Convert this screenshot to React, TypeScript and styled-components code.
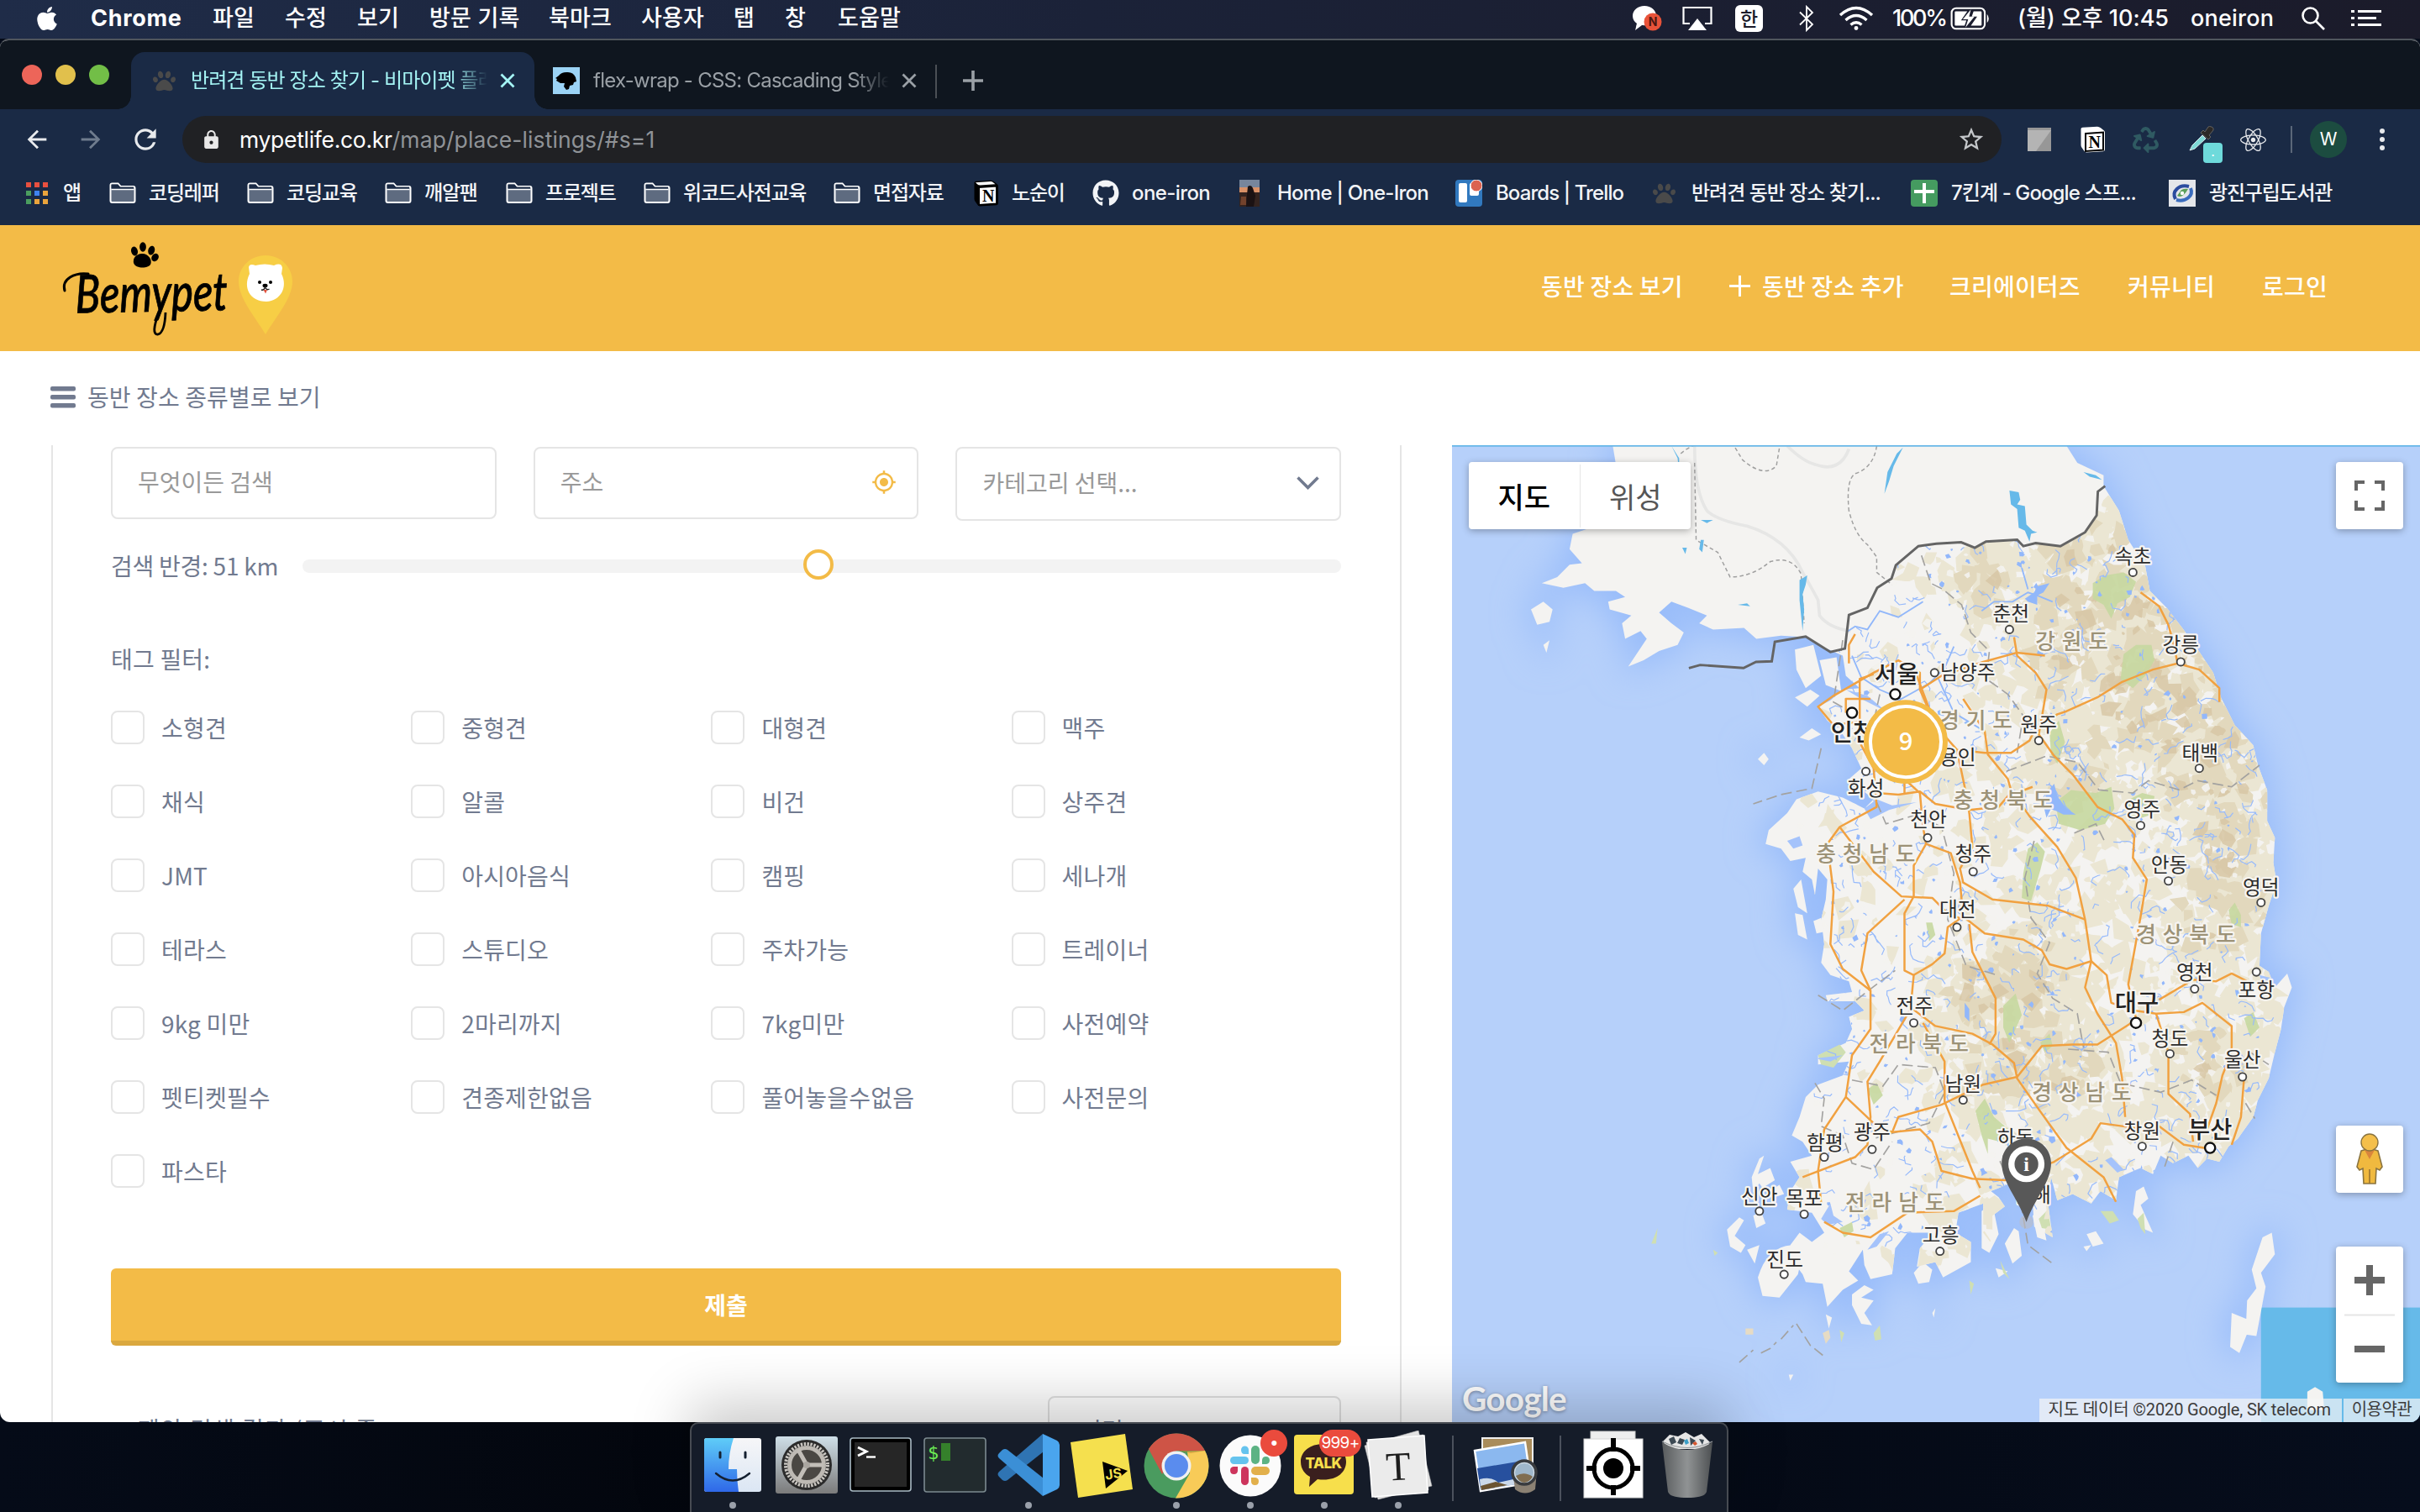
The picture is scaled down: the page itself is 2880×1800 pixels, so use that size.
import React from "react";
import styled, { createGlobalStyle, css } from "styled-components";
import { FaApple, FaGithub, FaPaw, FaReact, FaRecycle } from "react-icons/fa";
import { MdArrowBack, MdArrowForward, MdGpsFixed, MdLock, MdRefresh, MdStarBorder } from "react-icons/md";

const UI = `"Inter", "Noto Sans CJK KR", sans-serif`;
const KR = `"Noto Sans CJK KR", "Noto Sans", sans-serif`;
const YELLOW = "#f3bb47";
const NAVY = "#1a2a45";

const GlobalStyle = createGlobalStyle`
  *, *::before, *::after { box-sizing: border-box; }
  body { margin: 0; background: #03070f; overflow: hidden; }
  svg { display: block; }
`;

const Desktop = styled.div`
  width: 2880px;
  height: 1800px;
  display: flex;
  flex-direction: column;
  overflow: hidden;
  background: linear-gradient(90deg, #050b18, #03060d 30%, #060d1c);
  font-family: ${UI};
`;

/* ---------- shared ---------- */
const Slot = styled.div<{ $w: number; $pad?: number }>`
  width: ${(p) => p.$w}px;
  padding-left: ${(p) => p.$pad ?? 0}px;
  flex: none;
  display: flex;
  align-items: center;
  white-space: nowrap;
`;

/* ---------- menu bar ---------- */
const MenuBar = styled.header`
  height: 46px;
  flex: none;
  display: flex;
  align-items: center;
  padding-left: 40px;
  background: linear-gradient(90deg, #1f2c48 0%, #1b2238 45%, #1b1b2a 100%);
  color: #fff;
  font-size: 27px;
  line-height: 44px;
  padding-bottom: 3px;
`;
const MenuItem = styled(Slot)<{ $bold?: boolean; $ls?: number }>`
  font-weight: ${(p) => (p.$bold ? 700 : 500)};
  letter-spacing: ${(p) => p.$ls ?? 0}px;
`;
const Grow = styled.div`
  flex: 1;
`;
const HanBox = styled.div`
  width: 33px;
  height: 32px;
  border-radius: 6px;
  background: #fff;
  color: #1b1b2a;
  font: 500 23px/31px ${KR};
  text-align: center;
`;

/* ---------- window ---------- */
const Window = styled.main`
  height: 1647px;
  flex: none;
  display: flex;
  flex-direction: column;
  border-top: 2px solid #50565d;
  border-radius: 10px 10px 12px 12px;
  overflow: hidden;
  background: #fff;
`;
const TabStrip = styled.div`
  height: 82px;
  flex: none;
  display: flex;
  align-items: flex-end;
  background: #0f161f;
`;
const Lights = styled.div`
  width: 156px;
  height: 82px;
  display: flex;
  align-items: center;
  gap: 16px;
  padding-left: 26px;
`;
const Light = styled.i<{ $c: string }>`
  width: 24px;
  height: 24px;
  border-radius: 50%;
  background: ${(p) => p.$c};
`;
const Tab = styled.div<{ $active?: boolean }>`
  position: relative;
  width: ${(p) => (p.$active ? 480 : 477)}px;
  height: 68px;
  display: flex;
  align-items: center;
  padding-left: ${(p) => (p.$active ? 26 : 22)}px;
  font-size: 24px;
  color: ${(p) => (p.$active ? "#a5f5f5" : "#9aa0a6")};
  ${(p) =>
    p.$active &&
    css`
      background: ${NAVY};
      border-radius: 16px 16px 0 0;
      &::before,
      &::after {
        content: "";
        position: absolute;
        bottom: 0;
        width: 16px;
        height: 16px;
      }
      &::before {
        left: -16px;
        background: radial-gradient(circle at 0 0, transparent 15.5px, ${NAVY} 16px);
      }
      &::after {
        right: -16px;
        background: radial-gradient(circle at 100% 0, transparent 15.5px, ${NAVY} 16px);
      }
    `}
`;
const TabTitle = styled.span<{ $w: number; $ls: number }>`
  width: ${(p) => p.$w}px;
  flex: none;
  overflow: hidden;
  white-space: nowrap;
  line-height: 36px;
  letter-spacing: ${(p) => p.$ls}px;
  mask-image: linear-gradient(90deg, #000 88%, transparent);
`;
const TabSep = styled.i`
  width: 2px;
  height: 40px;
  margin: 0 30px 13px 0;
  background: #4a4f55;
`;
const Toolbar = styled.div`
  height: 72px;
  flex: none;
  display: flex;
  align-items: center;
  padding-left: 27px;
  background: ${NAVY};
  color: #e8eaed;
`;
const Omnibox = styled.div`
  width: 2165px;
  height: 56px;
  border-radius: 28px;
  display: flex;
  align-items: center;
  background: #202124;
  padding-left: 22px;
  font-size: 26.5px;
  letter-spacing: -0.3px;
  color: #fff;
  em {
    font-style: normal;
    letter-spacing: 0.1px;
    color: #8f9397;
  }
`;
const DropperBadge = styled.span`
  position: absolute;
  left: 18px;
  top: 20px;
  width: 23px;
  height: 24px;
  border-radius: 4px;
  background: #6edadb;
  color: #fff;
  font-size: 16px;
  line-height: 20px;
  text-align: center;
`;
const Relative = styled.div`
  position: relative;
  flex: none;
`;
const Avatar = styled.div`
  width: 44px;
  height: 44px;
  border-radius: 50%;
  background: #1c4c40;
  color: #fff;
  font-size: 21px;
  line-height: 44px;
  text-align: center;
`;
const Bookmarks = styled.nav`
  height: 66px;
  flex: none;
  display: flex;
  align-items: center;
  padding: 0 0 10px 31px;
  background: ${NAVY};
  color: #f2f4f7;
  font-size: 24px;
  font-weight: 500;
`;
const Bookmark = styled(Slot)<{ $gap: number; $ls?: number }>`
  gap: ${(p) => p.$gap}px;
  letter-spacing: ${(p) => p.$ls ?? -0.9}px;
  line-height: 36px;
`;

/* ---------- page ---------- */
const PageHeader = styled.header`
  height: 150px;
  flex: none;
  display: flex;
  align-items: center;
  padding-left: 70px;
  background: ${YELLOW};
`;
const Brand = styled.div`
  display: flex;
  width: 300px;
  height: 150px;
`;
const Nav = styled.nav`
  display: flex;
  padding-bottom: 6px;
  color: #fff;
  font: 500 28px/40px ${KR};
  letter-spacing: 0.2px;
`;
const CategoryBar = styled.div`
  height: 112px;
  flex: none;
  display: flex;
  align-items: center;
  gap: 14px;
  padding: 0 0 2px 60px;
  color: #717a8f;
  font: 400 28px/40px ${KR};
  letter-spacing: 0.1px;
`;
const CategoryText = styled.span`
  margin-top: -2px;
`;
const Body = styled.div`
  flex: 1;
  min-height: 0;
  display: flex;
`;
const Panel = styled.section`
  width: 1607px;
  margin: 0 60px 0 61px;
  border: solid #e5e5e5;
  border-width: 0 2px;
  padding: 2px 70px 0 69px;
  display: flex;
  flex-direction: column;
  overflow: hidden;
  color: #717a8f;
  font: 400 28px/40px ${KR};
  letter-spacing: 0.2px;
`;
const Fields = styled.div`
  flex: none;
  height: 88px;
  display: flex;
  justify-content: space-between;
  align-items: flex-start;
`;
const Field = styled.div<{ $h?: number }>`
  width: 458.6px;
  height: ${(p) => p.$h ?? 86}px;
  display: flex;
  align-items: center;
  justify-content: space-between;
  border: 2px solid #e5e5e5;
  border-radius: 8px;
  padding: 0 24px 2px 30px;
  letter-spacing: 0;
  color: #999;
`;
const FieldText = styled.span`
  margin-top: -2px;
`;
const RadiusRow = styled.div`
  flex: none;
  height: 106px;
  display: flex;
  align-items: center;
`;
const RadiusLabel = styled.span`
  width: 228px;
  letter-spacing: -0.25px;
  margin-top: -1px;
`;
const Track = styled.div`
  position: relative;
  flex: 1;
  height: 16px;
  margin-top: 2px;
  border-radius: 8px;
  background: #f3f3f3;
`;
const Thumb = styled.i<{ $pos: number }>`
  position: absolute;
  left: ${(p) => p.$pos}%;
  top: -12px;
  width: 36px;
  height: 36px;
  margin-left: -18px;
  border: 4px solid ${YELLOW};
  border-radius: 50%;
  background: #fff;
`;
const FilterTitle = styled.div`
  flex: none;
  margin-top: 38px;
`;
const Tags = styled.div`
  flex: none;
  margin-top: 18px;
  display: grid;
  grid-template-columns: repeat(4, 357.2px);
  grid-auto-rows: 88px;
`;
const Tag = styled.label`
  display: flex;
  align-items: center;
  gap: 20px;
`;
const Box = styled.i`
  width: 40px;
  height: 40px;
  border: 2px solid #e5e5e5;
  border-radius: 8px;
`;
const Submit = styled.button`
  flex: none;
  height: 92px;
  margin-top: 72px;
  border: 0;
  border-bottom: 6px solid #daa83f;
  border-radius: 6px;
  background: ${YELLOW};
  color: #fff;
  font: 700 28px/40px ${KR};
`;
const ResultRow = styled.div`
  flex: none;
  display: flex;
  justify-content: space-between;
  margin-top: 60px;
  padding-left: 32px;
`;
const ResultText = styled.span`
  padding-top: 19px;
  line-height: 40px;
  letter-spacing: 1.4px;
`;
const Sort = styled.div`
  width: 349px;
  height: 86px;
  border: 2px solid #e0e0e0;
  border-radius: 8px;
  padding: 18px 36px;
`;

/* ---------- map ---------- */
const MapPane = styled.section`
  position: relative;
  flex: 1;
  overflow: hidden;
  background: #b6d0fa;
`;
const Control = styled.div<{ $x: number; $y: number; $w?: number; $h?: number }>`
  position: absolute;
  left: ${(p) => p.$x}px;
  top: ${(p) => p.$y}px;
  width: ${(p) => p.$w ?? 80}px;
  height: ${(p) => p.$h ?? 80}px;
  display: flex;
  align-items: center;
  justify-content: center;
  border-radius: 4px;
  background: #fff;
  box-shadow: 0 2px 8px rgba(0, 0, 0, 0.3);
`;
const MapType = styled.span<{ $on?: boolean }>`
  flex: 1;
  line-height: 75px;
  text-align: center;
  font-family: ${KR};
  font-size: 34px;
  font-weight: ${(p) => (p.$on ? 500 : 400)};
  color: ${(p) => (p.$on ? "#000" : "#565656")};
  border-left: ${(p) => (p.$on ? "0" : "1px solid #e6e6e6")};
`;
const ZoomControl = styled(Control)`
  flex-direction: column;
`;
const Credits = styled.div`
  position: absolute;
  right: 0;
  bottom: 0;
  height: 28px;
  display: flex;
  gap: 2px;
  color: #3c3c3c;
  font: 400 20px/27px Roboto, ${KR};
`;
const Credit = styled.span<{ $ls: number; $right: number }>`
  background: rgba(245, 245, 245, 0.7);
  padding: 0 ${(p) => p.$right}px 0 10px;
  letter-spacing: ${(p) => p.$ls}px;
  white-space: nowrap;
`;
const GoogleMark = styled.div`
  position: absolute;
  left: 12px;
  bottom: 6px;
  color: #fff;
  font: 700 40.5px/44px Lato, sans-serif;
  letter-spacing: -0.8px;
  text-shadow: 0 1px 4px rgba(0, 0, 0, 0.4);
`;

/* ---------- dock ---------- */
const DockArea = styled.footer`
  flex: 1;
  display: flex;
  justify-content: center;
  padding-right: 2px;
`;
const DockBar = styled.div`
  width: 1236px;
  height: 107px;
  display: flex;
  padding-left: 5px;
  border: 2px solid #474b52;
  border-bottom: 0;
  border-radius: 10px 10px 0 0;
  background: #151c29;
  box-shadow: 0 -20px 70px rgba(0, 0, 0, 0.22);
  position: relative;
`;
const DockItem = styled.div<{ $run?: boolean }>`
  position: relative;
  width: 88px;
  height: 105px;
  display: flex;
  justify-content: center;
  padding-top: 8px;
  &::after {
    content: "";
    display: ${(p) => (p.$run ? "block" : "none")};
    position: absolute;
    left: 40px;
    top: 93px;
    width: 8px;
    height: 8px;
    border-radius: 50%;
    background: #9aa0aa;
  }
`;
const DockSep = styled.div`
  width: 40px;
  padding: 14px 0 0 20px;
  &::before {
    content: "";
    display: block;
    width: 2px;
    height: 78px;
    background: #4b515c;
  }
`;
const DockBadge = styled.span<{ $x: number; $w: number }>`
  position: absolute;
  left: ${(p) => p.$x}px;
  top: 7px;
  width: ${(p) => p.$w}px;
  height: 32px;
  border-radius: 16px;
  background: #ea4b3d;
  color: #fff;
  font-size: 19px;
  line-height: 32px;
  letter-spacing: -0.7px;
  text-align: center;
`;

/* ================= drawings ================= */
const Battery = () => (
  <svg width="49" height="30" viewBox="0 0 46 28">
    <rect x="1.5" y="2.5" width="37" height="23" rx="5" fill="none" stroke="#fff" strokeWidth="2" />
    <path d="M5 7q0-1 1-1h13l-7 10h6l-2 6H6q-1 0-1-1zM35 7q0-1-1-1h-8l-2 6h6l-7 10h11q1 0 1-1z" fill="#fff" />
    <path d="M23 4l-9 11h6l-3 9 10-12h-6z" fill="#fff" />
    <path d="M41 9q4 5 0 10z" fill="#fff" />
  </svg>
);
const Wifi = () => (
  <svg width="42" height="30" viewBox="0 0 42 30" fill="none" stroke="#fff" strokeWidth="3.4">
    <path d="M2 11Q21-6 40 11M8.500 17Q21 6 33.500 17M14.500 22.500Q21 17 27.500 22.500" />
    <circle cx="21" cy="26.500" r="2.400" fill="#fff" stroke="none" />
  </svg>
);
const Bluetooth = () => (
  <svg width="20" height="32" viewBox="0 0 20 32" fill="none" stroke="#fff" strokeWidth="1.8">
    <path d="M2 8.500L17 23l-7 7V2l7 7L2 23.500" />
  </svg>
);
const Talk = () => (
  <svg width="36" height="32" viewBox="0 0 36 32">
    <path d="M15 1C7 1 1 6 1 13c0 4 2 7 5 9-1 3-1 5-2 8l8-6c10 1 17-4 17-11S23 1 15 1z" fill="#fff" />
    <circle cx="25" cy="20" r="10.500" fill="#e8533a" />
    <text x="25" y="25" fontSize="14" fontWeight="700" textAnchor="middle" fill="#4a1712" fontFamily="Inter, sans-serif">N</text>
  </svg>
);
const AirPlay = () => (
  <svg width="36" height="30" viewBox="0 0 36 30">
    <path d="M9 21H1.500V2h33v19H27" fill="none" stroke="#fff" strokeWidth="2.2" />
    <path d="M18 15l11 14H7z" fill="#fff" />
  </svg>
);
const Magnifier = () => (
  <svg width="30" height="30" viewBox="0 0 30 30" fill="none" stroke="#fff" strokeWidth="2.6">
    <circle cx="11.500" cy="11.500" r="9" />
    <path d="M18 18l10 10" />
  </svg>
);
const ListIcon = () => (
  <svg width="38" height="22" viewBox="0 0 38 22" fill="#fff">
    <path d="M0 1h4v3H0zM0 9h4v3H0zM0 17h4v3H0zM8 1h28v3H8zM8 9h22v3H8zM8 17h28v3H8z" />
  </svg>
);
const Cross = () => (
  <svg width="18" height="18" viewBox="0 0 18 18" stroke="currentColor" strokeWidth="2.8">
    <path d="M1.500 1.500l15 15M16.500 1.500l-15 15" />
  </svg>
);
const Mdn = () => (
  <svg width="32" height="32" viewBox="0 0 32 32">
    <rect width="32" height="32" fill="#9bd3f5" />
    <path d="M7 10q3-4 9-4 8-1 11 6l1 5-3 1-1 3-4 1-1 4-3 1-3-4 1-4-5 0-5-3 1-2-2-1z" fill="#000" />
  </svg>
);
const Folder = () => (
  <svg width="32" height="26" viewBox="0 0 32 26">
    <path d="M1.500 3.500q0-2 2-2h7l3 3.500h15q2 0 2 2V22q0 2-2 2h-25q-2 0-2-2z" fill="#5e6b80" stroke="#fff" strokeWidth="2" />
    <path d="M2.500 8.500h27" stroke="#fff" strokeWidth="1.500" />
    <path d="M2.500 2.500h8l2.500 3h16v2h-26.500z" fill={NAVY} />
  </svg>
);
const AppsGrid = () => (
  <svg width="26" height="26" viewBox="0 0 26 26">
    {["#e8503f", "#e8503f", "#e8503f", "#4b9e5f", "#3f83f0", "#eaa43c", "#4b9e5f", "#eaa43c", "#eaa43c"].map((c, i) => (
      <rect key={i} x={(i % 3) * 10} y={Math.floor(i / 3) * 10} width="6" height="6" fill={c} />
    ))}
  </svg>
);
const Notion = ({ light }: { light?: boolean }) => (
  <svg width="32" height="32" viewBox="0 0 32 32">
    <path d="M2.500 3.500q0-1.500 2-1.700L22 .8q2 0 4 1.500l4 3.200q1 .8 1 2.500V28q0 2-2 2.200l-20 1.200q-1.500 0-2.500-1.400l-3-4.200q-1-1.300-1-3z" fill={light ? "#fff" : "#000"} />
    <path d="M4 3.200L22 2q1.500 0 3 1.200l2.500 2L9.500 6.500q-2 0-3.500-1.200z" fill="#fff" />
    <path d="M8 9l21-1.500V28.500L8 30z" fill="#fff" stroke="#000" strokeWidth="2" />
    <text x="18.700" y="25.800" fontFamily="Liberation Serif, serif" fontWeight="700" fontSize="20" textAnchor="middle" fill="#000">N</text>
  </svg>
);
const Portrait = () => (
  <svg width="24" height="32" viewBox="0 0 24 32">
    <rect width="24" height="32" fill="#33231f" />
    <rect width="24" height="9" fill="#77869c" />
    <rect y="9" width="24" height="6" fill="#d99167" />
    <path d="M10 8q4-3 6 2l3 9-2 13H8l1-14z" fill="#1b1213" />
    <path d="M2 20h6v10H1z" fill="#72422c" />
  </svg>
);
const Trello = () => (
  <svg width="32" height="32" viewBox="0 0 32 32">
    <rect width="32" height="32" rx="4" fill="#3179bf" />
    <rect x="4" y="4" width="10" height="23" rx="2" fill="#fff" />
    <rect x="17" y="4" width="11" height="15" rx="2" fill="#fff" />
    <circle cx="25" cy="7" r="7" fill="#db6350" stroke="#fff" strokeWidth="1" />
  </svg>
);
const Sheets = () => (
  <svg width="32" height="32" viewBox="0 0 32 32">
    <rect width="32" height="32" rx="4" fill="#459b60" />
    <path d="M14 4h4v8h10v4H18v12h-4V16H4v-4h10z" fill="#fff" />
  </svg>
);
const Library = () => (
  <svg width="32" height="32" viewBox="0 0 32 32">
    <rect width="32" height="32" fill="#e4e6ea" />
    <path d="M8 23C3 14 12 5 24 8" fill="none" stroke="#2b4c9f" strokeWidth="4" />
    <path d="M26 10C30 19 20 27 9 24" fill="none" stroke="#3a6cbd" strokeWidth="4" />
    <path d="M10 19q6 4 13-8-8-1-10 4z" fill="#5ba05a" />
    <circle cx="16" cy="16" r="2.200" fill="#fff" />
  </svg>
);
const Dropper = () => (
  <svg width="32" height="32" viewBox="0 0 32 32">
    <path d="M2 29l3-6L17 11l4 4L8 27z" fill="#7fd9d6" stroke="#d7e8ea" strokeWidth="1" />
    <path d="M15 8l9 8 3-3-2-2 5-6q1-3-2-4t-4 0l-4 6-2-2z" fill="#2c2927" stroke="#63625f" />
  </svg>
);
const GreySquare = () => (
  <svg width="28" height="28" viewBox="0 0 28 28">
    <rect width="28" height="28" fill="#979797" />
    <path d="M0 3h28L10 28H0z" fill="#b4b4b4" />
  </svg>
);

const Logo = () => (
  <svg width="290" height="150" viewBox="0 0 290 150">
    <g fill="#000">
      <ellipse cx="90" cy="31" rx="3.900" ry="5.500" transform="rotate(-15 90 31)" />
      <ellipse cx="100" cy="26" rx="3.900" ry="5.800" />
      <ellipse cx="110.500" cy="30" rx="3.900" ry="5.500" transform="rotate(15 110 29)" />
      <ellipse cx="115.500" cy="38.500" rx="4" ry="5" transform="rotate(35 115 37)" />
      <path d="M98 34c-7 1-10 6-9 11 2 7 17 7 20 2 3-6-3-14-11-13z" />
    </g>
    <text
      x="20"
      y="103"
      fontFamily="Lato, sans-serif"
      fontStyle="italic"
      fontSize="63"
      fontWeight="500"
      textLength="181"
      lengthAdjust="spacingAndGlyphs"
      transform="rotate(-1 100 100)"
      stroke="#000"
      strokeWidth=".8"
      fill="#000"
    >
      Bemypet
    </text>
    <path d="M7 78c-4-14 12-22 28-20" fill="none" stroke="#000" strokeWidth="3" strokeLinecap="round" />
    <path d="M119 104q-10 27-1 26 8-2 9-26" fill="none" stroke="#000" strokeWidth="2.800" />
    <path d="M246 36c-18 0-32 14-32 31 0 20 20 43 32 63 12-20 32-43 32-63 0-17-14-31-32-31z" fill="#f7ce45" />
    <path d="M226 50q1-5 8-2 11-3 22 0 9-4 10 3l-1 7c8 16-1 32-18 33-20 0-28-17-20-33z" fill="#fff" />
    <circle cx="239" cy="68" r="2" />
    <circle cx="252" cy="68" r="2" />
    <ellipse cx="245.500" cy="72" rx="3" ry="2.200" />
    <path d="M241 77q3 1 4.500-3 2 4 5 2" fill="none" stroke="#222" strokeWidth="1.500" />
    <path d="M243.500 77h4.500l-2 4.500z" fill="#e0523f" />
  </svg>
);

/* ----- map artwork ----- */
const LAND =
  "M1045 289L1047 301 1043 320 1043 338 1019 346 1017 356 1025 365 1017 366 1009 374 999 378 1013 381 1027 378 1033 383 1047 383 1053 387 1042 390 1043 395 1057 399 1051 404 1053 414 1063 409 1067 414 1061 423 1055 432 1065 428 1075 422 1087 418 1091 410 1083 404 1075 397 1083 390 1094 394 1106 399 1101 404 1110 408 1130 407 1138 414 1154 412 1170 413 1178 418 1194 425 1196 438 1205 446 1194 447 1186 454 1178 458 1184 467 1194 476 1200 485 1206 498 1198 505 1204 510 1214 518 1208 524 1194 517 1178 513 1164 518 1158 527 1146 538 1144 547 1154 550 1160 558 1170 556 1168 565 1174 570 1176 580 1178 563 1184 570 1183 583 1180 596 1182 612 1180 624 1186 632 1198 636 1200 643 1183 645 1184 649 1202 649 1208 655 1198 659 1200 667 1196 676 1178 684 1178 690 1198 688 1194 697 1178 703 1170 711 1166 724 1161 736 1168 740 1174 749 1160 753 1166 763 1160 772 1158 784 1174 786 1182 799 1174 805 1166 799 1160 807 1162 818 1168 826 1170 831 1181 832 1184 847 1194 836 1204 830 1198 824 1207 810 1208 820 1212 829 1226 826 1228 809 1236 799 1252 799 1244 809 1242 821 1254 818 1259 828 1277 818 1277 805 1267 799 1269 786 1285 780 1285 799 1291 807 1291 788 1299 782 1295 776 1290 772 1305 766 1317 778 1318 795 1330 802 1327 780 1329 763 1333 778 1343 774 1355 780 1361 772 1371 778 1373 763 1387 757 1395 761 1400 749 1408 754 1418 749 1424 757 1430 751 1438 753 1444 743 1450 738 1460 724 1463 713 1470 699 1474 682 1478 667 1480 653 1485 640 1482 631 1474 640 1470 630 1464 626 1465 605 1470 587 1475 572 1473 559 1474 543 1469 532 1469 512 1463 496 1460 483 1448 470 1439 452 1434 436 1424 421 1414 407 1404 394 1393 383 1390 367 1379 350 1373 331 1363 315 1363 308 1346 300 1339 289Z";
const ISLANDS =
  "M992 395l8-5 6 5-2 8-8 2zM1000 418l4-3-2 8zM1163 421l12-3 5 20-10 8-6-12zM1179 428l11-2 3 22-10-4zM1166 478l8-6 6 4-8 4zM1163 452l10-5 6 4-8 7zM1139 492l4-4 3 4-3 4zM1162 576l5-6 4 22-6-4zM1175 597l5-2 2 9-5 1zM1163 592l5 1 3 16-6-3zM1135 763l5-12 3-2-4 12 8-4 3 8-8 5-2-3-4 6zM1145 773l8-5 3 6-6 2zM1119 797l8-8 3 2-6 10 7 6-3 5-7-4zM1132 810l8-3-3 12zM1136 788l5-3 3 8-6 3zM1139 828q6-20 22-21l7 5-3 14-12 15-11-1zM1200 839l8-6 6 3-8 5 8 2-6 8 5 8-7-1-6-12zM1240 825l6-7 6 5-2 8-7 1zM1284 785l7-5 4 20-6 12-5-3zM1299 806l6-10 3 2 2 16-6 5zM1293 822l8 2-6 4zM1317 788l5-4 4 20-6-2zM1384 772l5-3 3 8-5 4 8 18-5-2-8-10zM1352 800l6-2 5 8-7 2zM1466 802l6-3 2 14-9 12 3 9-6 32-7-1 1-22 6-8-3-12zM1446 851l10 4 1 7-6 15-6-4zM1495 902l5-3 5 3 1 12h-11zM1183 852l4 2-2 7zM1252 851l2-3-1 6zM1350 808l5-1-3 4zM1159 891l3 0-2 4z";
const INLETS =
  "M1208 524l8-6 10 4 16-2-18 5-12 6zM1196 447l14 4 12 10-16-8zM1176 686l18-2-8 4zM1210 810l8-10 6-2-8 10zM1180 790l6-10 2 8 6 4-10 2zM1372 760l-8-8 4-2 8 8zM1464 632l8 2-6 4zM1158 545l8-3 2 6-6 2z";
const GREENS =
  "M1070 806l4-10-1 10zM1110 810l3 2-2 2zM1296 817l6 12-4-4zM1276 830l3 2-2 7zM1214 864l4-5 1 9-4 1zM1192 862l3 2-2 6zM1361 785l8 0 4 6-6 2zM1385 790l4-4 1 14-3-4zM1178 684l14-7 4 5-8 10-8-2zM1321 790l6-6 2 13-6-1z";
const BORDER =
  "1094.300,433 1101.600,431 1129.700,433 1137.800,429 1148,428.600 1150,416 1170,412.600 1186,422.600 1195.400,420.400 1198,398.600 1210,394 1216.300,381 1225.600,375 1228.400,366.400 1243,354 1254.600,352.400 1270.700,351.500 1279.600,355 1286.800,351 1307,349.800 1311,354 1319,352 1335,354 1351,345 1358.500,334 1359.300,318.600 1364,315";
const ROADS = [
  "1387,384 1399,393 1405,405 1408,416 1411,430 1425,434 1438,446 1438,455",
  "1411,430 1395,434 1375,442 1359,452 1339,461 1333,463 1319,472 1315,480 1303,488 1286,488 1268,486 1254,470 1242,438",
  "1305,413 1307,425 1319,436 1326,447 1323,465 1321,476 1331,490 1343,502 1359,523 1375,531 1383,541 1382,556 1391,570 1387,594 1383,616 1379,638 1384,660",
  "1325,425 1307,423 1285,429 1258,438 1244,447",
  "1254,470 1244,447 1244,436 1230,428 1214,436 1188,451 1178,458 1188,470 1204,468 1206,483 1214,498 1216,523 1192,536 1184,547 1188,578 1186,612 1194,628 1212,642 1212,667 1200,684 1196,711 1182,732 1178,759 1180,780",
  "1198,430 1198,418 1202,411",
  "1196,462 1196,453 1212,453",
  "1205,470 1205,440 1214,437",
  "1234,505 1244,514 1246,536 1248,547 1264,553 1270,572 1272,594 1286,605 1311,609 1323,616 1328,625 1339,628 1355,623 1365,632 1368,650 1383,655 1397,657 1415,656 1427,650 1446,665 1446,682 1440,697 1436,715 1430,732",
  "1272,453 1286,474 1288,489 1301,505 1303,512 1315,529 1333,549 1345,569 1351,596 1355,623 1351,640 1359,657 1371,676 1375,699 1377,724",
  "1276,527 1278,549 1270,563 1272,572 1291,583 1327,587 1351,596",
  "1216,514 1230,515 1244,513 1254,521 1276,525 1295,523 1301,516 1317,510",
  "1192,536 1214,565 1232,581 1252,582 1262,592 1272,596",
  "1248,547 1240,561 1240,581 1234,592 1234,629 1240,632 1238,653 1254,665 1278,670 1291,677 1305,689 1307,699 1321,719 1339,744 1363,763 1371,779",
  "1234,583 1210,605 1206,629 1212,642",
  "1238,654 1218,688 1210,701 1212,724 1210,742 1202,750 1168,763",
  "1246,663 1260,688 1260,714 1278,759 1283,770",
  "1196,711 1214,728 1226,734",
  "1226,734 1230,724 1258,716 1285,703 1307,698 1323,678 1343,677 1359,677 1381,663",
  "1214,735 1244,732 1252,740 1258,759 1278,764 1299,765 1331,753 1355,738 1361,728 1383,731 1399,730 1415,742 1434,745",
  "1182,792 1194,799 1212,802 1236,786 1266,785 1283,775",
  "1272,594 1262,601 1260,618 1252,625 1240,632",
  "1276,599 1278,617 1293,647 1293,670 1289,677",
  "1397,657 1405,682 1405,709 1419,722 1421,740",
  "1399,648 1421,635 1436,636 1446,631 1456,636",
  "1454,699 1452,724 1446,742",
  "1234,500 1234,514",
  "1268,486 1273,510 1276,527",
];

const DISTRICT_LINES =
  "M1245 360l6 18 8 4 12 10 6 18 12 12-2 18 14 10 10 14-4 24M1300 500l26-10 20 4 14 18 22 2 10-8 20 6 12-6 22 4 18-14M1216 520l6 14 20-6 16 8 8 30-4 30 12 30 20 6M1318 545l-6 24 4 26 12 16-8 20 10 16 16 10 4 22M1344 540l14-6 6 12M1200 700l20 4 10-14 24 2 6 16-10 20-22 6-14 4M1340 680l26 2 8 20 26 6 20-8 16 10M1178 645l16 10 18-14 16-12M1176 702l6 10-2 18 14 6 6 18 14 4 12-18M1306 735l-10 18 14 30 4 24 16 12M1180 485l-6 26-20 4-18 6M1194 415l-6 40 14 8M1218 450l-4 18M1127 883l9-8 M1141 877l6-3 4-4 M1154 868l8-9 M1164 858l9 14 10 8M1455 715l6 10M1408 740l-6 18M1458 682l12 8";

const NORTH_LINES = "M1098 289q0 30 8 42 6 6 26 10 26 8 36 30 8 14 10 18l1 10q6 8 20 10M1158 289q10 10 18 12 16 6 22-10";
const NORTH_DASH =
  "M1089 294q14-12 34-6l6 10q14 12 22 4l2-12M1216 289q-2 14-14 18-6 4-4 24 4 16 12 22l6 8 0 10 10 8M1098 300l1 50 14 8 8 16q14 0 26-10 14-4 20 8l2 32";

function seeded(seed: number) {
  let s = seed;
  return () => {
    s = (s * 1664525 + 1013904223) % 4294967296;
    return s / 4294967296;
  };
}

/* mountain masses: centre and radius */
const RIDGES = [
  [1350, 365, 26], [1366, 395, 30], [1388, 430, 32], [1400, 462, 34], [1425, 480, 30], [1440, 505, 26], [1340, 425, 22], [1290, 375, 24],
  [1345, 505, 20], [1320, 620, 22], [1290, 690, 24], [1306, 660, 22], [1440, 600, 26], [1440, 550, 22], [1432, 685, 22], [1335, 700, 22], [1280, 640, 18],
];
function reliefAt(x: number, y: number) {
  let v = 0;
  for (const [rx, ry, r] of RIDGES) v += Math.exp(-((x - rx) ** 2 + (y - ry) ** 2) / (r * r * 1.300));
  return v;
}

function shard(rnd: () => number, x: number, y: number, size: number) {
  const n = 4 + Math.floor(rnd() * 4);
  const start = rnd() * 6.280;
  const pts = Array.from({ length: n }, (_, k) => {
    const a = start - (k / n) * 6.280;
    const r = size * (0.300 + rnd() * 0.9);
    return `${(x + Math.cos(a) * r).toFixed(1)} ${(y + Math.sin(a) * r).toFixed(1)}`;
  });
  return `M${pts.join("L")}Z`;
}
function layer(seed: number, count: number, min: number, max: number, accept: (h: number, x: number, y: number, roll: number) => boolean) {
  const rnd = seeded(seed);
  let d = "";
  for (let i = 0; i < count; i++) {
    const x = 1150 + rnd() * 330;
    const y = 318 + rnd() * 500;
    if (!accept(reliefAt(x, y), x, y, rnd())) continue;
    d += shard(rnd, x, y, min + rnd() * (max - min));
  }
  return d;
}
const RELIEF_LAYERS: [string, string, number][] = [
  [layer(11, 3800, 3, 11, (h, x, _y, r) => r < h * 1.500 + (x > 1320 ? 0.5 : x > 1250 ? 0.26 : 0.06)), "#ebe6d3", 1],
  [layer(29, 2600, 3, 10, (h, _x, _y, r) => h > 0.4 && r < h * 0.85), "#e2d8bd", 1],
  [layer(43, 1500, 2, 8, (h, _x, _y, r) => h > 0.85 && r < h * 0.34), "#d7c6a4", 0.8],
  [layer(57, 620, 1.500, 4, (_h, x, _y, r) => r < (x > 1320 ? 0.4 : 0.7)), "#f4f3f0", 0.9],
];

function buildRivers(): string {
  const rnd = seeded(19);
  let d = "";
  for (let i = 0; i < 560; i++) {
    let x = 1185 + rnd() * 280;
    let y = 350 + rnd() * 450;
    let heading = rnd() * 6.280;
    d += `M${x.toFixed(1)} ${y.toFixed(1)}`;
    const steps = 2 + Math.floor(rnd() * 5);
    for (let k = 0; k < steps; k++) {
      heading += (rnd() - 0.5) * 3;
      const len = 1 + rnd() * 3.500;
      x += Math.cos(heading) * len;
      y += Math.sin(heading) * len;
      d += `L${x.toFixed(1)} ${y.toFixed(1)}`;
    }
  }
  return d;
}
function buildPonds(): string {
  const rnd = seeded(91);
  let d = "";
  for (let i = 0; i < 320; i++) d += shard(rnd, 1185 + rnd() * 280, 350 + rnd() * 450, 0.800 + rnd() * 1.800);
  return d;
}
const RIVERS = buildRivers();
const PONDS = buildPonds();
const PARKS =
  "M1356 378l8-5 12-2 8 6-4 10-8 4-4 10-5-9-7-4zM1376 424l8-6 10 0 2 10-6 10-8 8-8-6zM1332 520l10-8 16 2 10-4 2 14-6 10-16 4-14-4zM1314 550l6-4 5 6-3 12-6 20-6-2 1-16zM1328 475l6-8 4 14-5 14-4-6zM1298 652l8-8 4 14-8 18-4-10zM1280 720l6-8 6 12 12 10-8 6-8-2 0 10-4-12zM1376 520l12-6 8 2-2 12-12 4zM1444 590l4-5 4 8 0 8-6-2zM1248 598l4 0 2 8-4 4zM1454 660l6-4 4 10-6 6zM1192 796l8-4 1 6-6 4zM1210 706l6-4 4 8-6 6zM1322 676l6-6 2 8-5 4z";

type CityDef = [string, number, number, number, number];
const CITIES: CityDef[] = [
  ["속초", 1382, 365.500, 1382, 371],
  ["춘천", 1303, 402.500, 1302, 408],
  ["강릉", 1413, 422.500, 1413, 429],
  ["남양주", 1275, 440.500, 1253.500, 436],
  ["원주", 1321, 474, 1321, 480],
  ["용인", 1268.500, 495.500, 0, 0],
  ["태백", 1425.500, 492.500, 1425, 498],
  ["화성", 1209, 515.500, 1209, 500],
  ["영주", 1388, 529, 1387, 535],
  ["천안", 1249.500, 536, 1249, 543],
  ["청주", 1278.500, 558, 1278.500, 565],
  ["안동", 1405.500, 565, 1405, 571],
  ["영덕", 1465, 580, 1465, 585],
  ["대전", 1268.500, 594, 1268, 601],
  ["영천", 1422, 635, 1422, 641],
  ["포항", 1462, 646.500, 1462, 630],
  ["전주", 1240.500, 656.500, 1240, 663],
  ["청도", 1406, 678, 1406, 683],
  ["울산", 1453, 691.500, 1453, 698],
  ["남원", 1272, 707.500, 1272, 713],
  ["하동", 1306, 742, 0, 0],
  ["함평", 1182.500, 745.500, 1182, 750],
  ["광주", 1213, 738.500, 1213, 745],
  ["창원", 1388, 738, 1388, 743],
  ["신안", 1140, 780, 1140, 785],
  ["목포", 1169, 781.500, 1169, 787],
  ["남해", 1317, 779, 0, 0],
  ["고흥", 1257.500, 805.500, 1257, 811],
  ["진도", 1156.500, 821, 1156, 826],
];
const BIG_CITIES: CityDef[] = [
  ["서울", 1229, 442.500, 1228, 450],
  ["인천", 1200.500, 480, 1200, 462],
  ["대구", 1384.500, 655.500, 1384, 663],
  ["부산", 1432, 738, 1432, 744],
];
const PROVINCES: [string, number, number][] = [
  ["강원도", 1344.500, 421],
  ["경기도", 1282.500, 472],
  ["충청북도", 1300, 523.500],
  ["충청남도", 1211, 558.500],
  ["경상북도", 1418.500, 611],
  ["전라북도", 1245.500, 681.500],
  ["경상남도", 1351, 713],
  ["전라남도", 1230, 784.500],
];

const MapArt = () => (
  <svg width="1152" height="1163" viewBox="940.820 288.560 627.200 633.200" preserveAspectRatio="none">
    <defs>
      <filter id="glow" x="-20%" y="-20%" width="140%" height="140%">
        <feGaussianBlur stdDeviation="11" />
      </filter>
      <clipPath id="land"><path d={LAND} /></clipPath>
      <clipPath id="south">
        <polygon points={`${BORDER} 1560,315 1560,900 1094,900`} />
      </clipPath>
    </defs>
    <g filter="url(#glow)">
      <path d={LAND + ISLANDS} fill="#98bcfa" stroke="#98bcfa" strokeWidth="8" strokeLinejoin="round" />
    </g>
    <rect x="1465" y="847.500" width="110" height="80" fill="#66bae9" />
    <path d={LAND} fill="#f4f3f1" />
    <path d={ISLANDS} fill="#f4f3f1" />
    <path d={GREENS} fill="#cfdfb2" />
    <path d="M1131 861h5v4h-5zM1181 864l4-2 1 5-3 4z" fill="#e6dbc4" />
    <g clipPath="url(#land)">
      <path d={NORTH_LINES} fill="none" stroke="#e6e6e5" strokeWidth="2" />
      <path d={NORTH_DASH} fill="none" stroke="#a0a0a0" strokeWidth=".8" strokeDasharray="2.500 1.800" />
      <path d="M1302 318l6 1 1 5-2 3 5 1 1 12 4 4 3 1-4 1-1 5-3-7-4-2-1-12-4-3zM1233 290l-6 12-3 10-3 8 2-14 6-12zM1083 289l5 8 0 10-1-10zM1166 376l5-3-1 6-2 6 1 10-1 14-2-20zM1102 350l2 0-1 8-2-2zM1090 355l3 0-1 4zM1102 337l8 0-4 2zM1350 306l8 2 4 3-8-2zM1126 392l6-1 2 2z" fill="#66b9e9" />
      <g clipPath="url(#south)">
        {RELIEF_LAYERS.map(([d, fill, opacity]) => (
          <path key={fill} d={d} fill={fill} opacity={opacity} />
        ))}
        <path d={PARKS} fill="#c6d8a0" opacity=".9" />
        <path d={RIVERS} fill="none" stroke="#97bafb" strokeWidth=".65" />
        <path d={PONDS} fill="#92b7fb" />
        <path d={INLETS} fill="#a5c3fb" />
        <path
          d="M1200 425l6 14 12 8 14 6 18-10 10-10 6-14M1256 440l10 22 20 12M1330 390l-10-4-6-2-10 6-12 0-8 6M1310 368l4 14M1196 410l6-4 8 2 8-12 12 4 16-10"
          fill="none"
          stroke="#91b7fa"
          strokeWidth="1"
        />
        <path d="M1326 514l5-6 2 8 6 8 6 4-8 0-8-4-3 6-2-8zM1273 650l3 4 0 8-3-3zM1312 388l6-4 2-4 8-2-4 6-4 2 0 6-6-2z" fill="#91b7fa" />
      </g>
    </g>
    <path d={DISTRICT_LINES} fill="none" stroke="#a3a2a0" strokeWidth=".9" strokeDasharray="7 3" />
    {ROADS.map((r, i) => (
      <polyline key={i} points={r} fill="none" stroke="#f1a140" strokeWidth="1.350" strokeLinejoin="round" />
    ))}
    <polyline points={BORDER} fill="none" stroke="#646464" strokeWidth="1.600" />
    <g fontFamily={KR} textAnchor="middle" stroke="#f7f5f1" strokeWidth="2.400" strokeLinejoin="round" paintOrder="stroke">
      {PROVINCES.map(([name, x, y]) => (
        <text key={name} x={x} y={y} fontSize="14" fontWeight="500" letterSpacing="4.300" fill="#9c9277">{name}</text>
      ))}
      {CITIES.map(([name, x, y]) => (
        <text key={name} x={x} y={y} fontSize="12.900" fill="#2c2c2c">{name}</text>
      ))}
      {BIG_CITIES.map(([name, x, y]) => (
        <text key={name} x={x} y={y} fontSize="15.500" fontWeight="500" fill="#222">{name}</text>
      ))}
    </g>
    {CITIES.filter((c) => c[3] > 0).map(([name, , , cx, cy]) => (
      <circle key={name} cx={cx} cy={cy} r="2.500" fill="#fff" stroke="#444" strokeWidth="1" />
    ))}
    {BIG_CITIES.map(([name, , , cx, cy]) => (
      <circle key={name} cx={cx} cy={cy} r="3.300" fill="#fff" stroke="#111" strokeWidth="1.300" />
    ))}
    <circle cx="1234.800" cy="480.800" r="27.200" fill={YELLOW} />
    <circle cx="1234.800" cy="480.800" r="22.900" fill="none" stroke="#fff" strokeWidth="2.200" />
    <text x="1234.900" y="486.200" fontFamily={KR} fontSize="16" fontWeight="500" fill="#fff" textAnchor="middle">9</text>
    <circle cx="1313" cy="792" r="4.500" fill="#bdbcc4" opacity=".6" />
    <path d="M1313 738c-9 0-16 7-16 16 0 12 10 22 16 38 6-16 16-26 16-38 0-9-7-16-16-16z" fill="#585858" />
    <circle cx="1313" cy="754.500" r="9.700" fill="#585858" stroke="#fff" strokeWidth="4" />
    <text x="1313" y="759" fontFamily="Liberation Serif, serif" fontWeight="700" fontSize="13" fill="#fff" textAnchor="middle">i</text>
    <rect x="940" y="288.500" width="630" height="1" fill="#66b7e8" />
  </svg>
);

const Pegman = () => (
  <svg width="36" height="64" viewBox="0 0 36 64">
    <path d="M8 22q10-4 20 0l5 19-3 4-4-2-1 18H11l-1-18-4 2-3-4z" fill="#f0b93f" stroke="#8a7440" strokeWidth="1.600" />
    <path d="M12 21h12l-6 11z" fill="#d9853c" />
    <path d="M18 44v17" stroke="#9a7430" strokeWidth="1.600" />
    <circle cx="18" cy="12" r="10" fill="#f4bf4b" stroke="#8a7440" strokeWidth="1.400" />
  </svg>
);

/* ----- dock artwork ----- */
const Art = ({ children }: { children: React.ReactNode }) => (
  <svg width="84" height="84" viewBox="0 0 84 84">{children}</svg>
);
const Finder = () => (
  <Art>
    <defs>
      <linearGradient id="fb" x2="0" y2="1"><stop stopColor="#5fcdf8" /><stop offset="1" stopColor="#2f68e8" /></linearGradient>
      <linearGradient id="fw" x2="0" y2="1"><stop stopColor="#f6f6f8" /><stop offset="1" stopColor="#dbe6f4" /></linearGradient>
    </defs>
    <rect x="8" y="9" width="68" height="64" rx="3" fill="url(#fw)" />
    <path d="M11 9h32q-6 18-6 37h10q0 14 2 27H11q-3 0-3-3V12q0-3 3-3z" fill="url(#fb)" />
    <path d="M27 26v6M57 26v6" stroke="#142030" strokeWidth="3" strokeLinecap="round" />
    <path d="M22 51q20 17 40 0" fill="none" stroke="#142030" strokeWidth="2.400" strokeLinecap="round" />
  </Art>
);
const Gear = () => (
  <Art>
    <defs><linearGradient id="gg" x2="0" y2="1"><stop stopColor="#cfdfe8" /><stop offset="1" stopColor="#7b7b7b" /></linearGradient></defs>
    <rect x="5" y="7" width="74" height="68" rx="3" fill="url(#gg)" />
    <circle cx="42" cy="41" r="30" fill="#2b2b2b" />
    <circle cx="42" cy="41" r="25" fill="none" stroke="#c9c6c1" strokeWidth="4" strokeDasharray="2.400 1.520" />
    <circle cx="42" cy="41" r="20.500" fill="#4a4743" stroke="#bdb9b3" strokeWidth="5" />
    <path d="M42 41h20M42 41l-10-18M42 41l-10 18" stroke="#c2beb8" strokeWidth="5" />
    <circle cx="42" cy="41" r="4" fill="#aaa6a0" />
  </Art>
);
const Terminal = () => (
  <Art>
    <rect x="6" y="9" width="72" height="63" rx="3" fill="#000" stroke="#a9bac4" strokeWidth="1.600" />
    <rect x="11" y="14" width="62" height="53" fill="#262626" />
    <path d="M15 20l10 5-10 5" fill="none" stroke="#fff" strokeWidth="3" />
    <path d="M25 31.500h11" stroke="#fff" strokeWidth="2.400" />
  </Art>
);
const ITerm = () => (
  <Art>
    <rect x="6" y="9" width="73" height="64" rx="3" fill="#222b2e" stroke="#7c8a90" strokeWidth="1.600" />
    <text x="10" y="34" fontSize="22" fontWeight="500" fontFamily="DejaVu Sans Mono, monospace" fill="#6ded55">$</text>
    <rect x="26" y="15" width="11" height="21" fill="#35802b" />
  </Art>
);
const VsCode = () => (
  <Art>
    <path d="M59 4L7 49q-3 3 0 6l4 4q3 2 6 0l43-34z" fill="#2f74b3" />
    <path d="M59 78L7 33q-3-3 0-6l4-4q3-2 6 0l43 34z" fill="#3b8fd6" />
    <path d="M59 4l17 8q3 2 3 5v48q0 3-3 5l-17 8z" fill="#4aa5ee" />
  </Art>
);
const JsNote = () => (
  <Art>
    <path d="M4 14L69 4l9 66-65 10z" fill="#f5e04e" />
    <path d="M42 37l30 11-26 21z" fill="#000" />
    <text x="45" y="58" fontSize="16" fontWeight="700" fontFamily="Inter, sans-serif" fill="#f5e04e" transform="rotate(-8 50 52)">JS</text>
  </Art>
);
const Chrome = () => (
  <Art>
    <circle cx="42" cy="42" r="38.500" fill="#4a9b5f" />
    <path d="M42 3.500A38.500 38.500 0 0 1 76 24H42L25 52 9 22A38.500 38.500 0 0 1 42 3.500z" fill="#ce5446" />
    <path d="M76 24A38.500 38.500 0 0 1 41 80.500L58 51 55 25z" fill="#f8cb58" />
    <path d="M42 24h34l-17 3z" fill="#b4862f" opacity=".5" />
    <circle cx="42" cy="42" r="17.500" fill="#f1f1f1" />
    <circle cx="42" cy="42" r="14" fill="#5a8cee" />
  </Art>
);
const Slack = () => (
  <Art>
    <circle cx="42" cy="42" r="36.500" fill="#fbfbfb" />
    <g fill="#65c3ee"><rect x="18" y="31" width="22" height="9" rx="4.500" /><path d="M31 23a4.500 4.500 0 0 1 9 0v5h-5q-4 0-4-5z" /></g>
    <g fill="#5cb384"><rect x="43" y="18" width="10" height="22" rx="5" /><path d="M56 35a4.500 4.500 0 1 1 5 5h-5z" /></g>
    <g fill="#cd355d"><rect x="31" y="43" width="9" height="22" rx="4.500" /><path d="M27 43v5a4.500 4.500 0 1 1-5-5z" /></g>
    <g fill="#e2b04b"><rect x="43" y="43" width="22" height="10" rx="5" /><path d="M43 56h5a4.500 4.500 0 1 1-5 5z" /></g>
  </Art>
);
const Kakao = () => (
  <Art>
    <rect x="6" y="5" width="71" height="71" rx="4" fill="#f7df4b" />
    <path d="M41 16c-16 0-27 9-27 21 0 9 5 15 11 18l-1 12 10-9c21 3 34-7 34-21 0-12-11-21-27-21z" fill="#3a1f1e" />
    <text x="41" y="45" fontSize="17" fontWeight="800" fontFamily="Inter, sans-serif" fill="#f7df4b" textAnchor="middle" letterSpacing="-.6">TALK</text>
  </Art>
);
const Typora = () => (
  <Art>
    <path d="M2 18L66 0l16 66-64 16z" fill="#e2e2e2" stroke="#b9b9b9" strokeWidth=".6" />
    <path d="M4 14L72 5l6 66-64 9z" fill="#f1f1f1" stroke="#c5c5c5" strokeWidth=".6" />
    <path d="M6 11l67-5 4 68-66 5z" fill="#ebebeb" stroke="#fff" strokeWidth="1.500" />
    <text x="42" y="59" fontSize="48" fontFamily="Liberation Serif, serif" fill="#1d1d1d" textAnchor="middle" transform="rotate(-3 42 42)">T</text>
  </Art>
);
const Preview = () => (
  <Art>
    <rect x="14" y="9" width="60" height="50" fill="#a98c5b" stroke="#eee" strokeWidth="2" />
    <path d="M5 24l60-10 7 48-60 10z" fill="#8bb8ef" stroke="#fff" strokeWidth="2.400" />
    <path d="M8 45l60-10 3 26-59 10z" fill="#27509e" />
    <path d="M11 58q14-4 22 4l18-4 4 6-43 7z" fill="#cbd9ea" />
    <path d="M12 66l18-5 14 4-31 6z" fill="#6b5432" />
    <path d="M50 48l3 22q12 9 24 0l2-22z" fill="#8b8173" />
    <circle cx="64" cy="50" r="14" fill="#9fb7cb" stroke="#393b3e" strokeWidth="3.500" />
    <circle cx="64" cy="50" r="11.500" fill="none" stroke="#dde4ea" strokeWidth="1" />
    <path d="M54 54q10-6 20 1-4 7-10 7t-10-8z" fill="#806d50" />
  </Art>
);
const Target = () => (
  <Art>
    <rect x="15" y="1" width="53" height="20" fill="#eee" stroke="#ccc" />
    <rect x="7" y="10" width="70" height="70" fill="#fff" stroke="#d5d5d5" />
    <circle cx="42" cy="45" r="23" fill="none" stroke="#000" strokeWidth="5" />
    <circle cx="42" cy="45" r="12" fill="#000" />
    <path d="M42 9v16M42 65v12M10 45h12M62 45h12" stroke="#000" strokeWidth="6" />
  </Art>
);
const Trash = () => (
  <Art>
    <defs><linearGradient id="tg"><stop stopColor="#585b5d" /><stop offset=".5" stopColor="#909394" /><stop offset="1" stopColor="#4d5052" /></linearGradient></defs>
    <path d="M13 13l8-8 10 2 9-5 10 6 9-4 10 10-4 8H18z" fill="#e6e6e6" />
    <path d="M12 14q30 18 60 0l-7 59q-2 7-23 7t-23-7z" fill="url(#tg)" />
    <path d="M20 10l6-3 3 7-6 3zM33 9l6 2-3 6-6-2zM45 8l7 4-6 6zM56 10l6 1-2 6z" fill="#3d4a54" />
    <path d="M38 12l4-2 2 5-4 2z" fill="#3b9fc8" />
    <path d="M48 15l4-2 2 3-3 2z" fill="#d4562f" />
    <path d="M12 13q30 15 60 0" fill="none" stroke="#979b9e" strokeWidth="1.200" />
  </Art>
);

/* ================= data ================= */
const MENUS: [string, number][] = [
  ["파일", 86], ["수정", 86], ["보기", 86], ["방문 기록", 142], ["북마크", 110], ["사용자", 110], ["탭", 61], ["창", 63], ["도움말", 80],
];
const FOLDERS: [string, number][] = [
  ["코딩레퍼", 164], ["코딩교육", 164], ["깨알팬", 144], ["프로젝트", 164], ["위코드사전교육", 226], ["면접자료", 165],
];
const NAV: [string, number][] = [["크리에이터즈", 212], ["커뮤니티", 160], ["로그인", 188]];
const TAGS = [
  "소형견", "중형견", "대형견", "맥주", "채식", "알콜", "비건", "상주견", "JMT", "아시아음식", "캠핑", "세나개", "테라스", "스튜디오",
  "주차가능", "트레이너", "9kg 미만", "2마리까지", "7kg미만", "사전예약", "펫티켓필수", "견종제한없음", "풀어놓을수없음", "사전문의", "파스타",
];

export default function App() {
  return (
    <Desktop>
      <GlobalStyle />
      <MenuBar>
        <Slot $w={68}><FaApple size={32} /></Slot>
        <MenuItem $w={145} $bold $ls={0.7}>Chrome</MenuItem>
        {MENUS.map(([t, w]) => <MenuItem key={t} $w={w} $ls={0.2}>{t}</MenuItem>)}
        <Grow />
        <Slot $w={60}><Talk /></Slot>
        <Slot $w={63}><AirPlay /></Slot>
        <Slot $w={75}><HanBox>한</HanBox></Slot>
        <Slot $w={48}><Bluetooth /></Slot>
        <Slot $w={64}><Wifi /></Slot>
        <MenuItem $w={69} $ls={-2.3}>100%</MenuItem>
        <Slot $w={80}><Battery /></Slot>
        <MenuItem $w={206} $ls={0}>(월) 오후 10:45</MenuItem>
        <MenuItem $w={131} $ls={0.2}>oneiron</MenuItem>
        <Slot $w={60}><Magnifier /></Slot>
        <Slot $w={82}><ListIcon /></Slot>
      </MenuBar>

      <Window>
        <TabStrip>
          <Lights>
            <Light $c="#ed6559" /><Light $c="#e1c04c" /><Light $c="#72be47" />
          </Lights>
          <Tab $active>
            <Slot $w={45}><FaPaw size={27} color="#4a4a4a" /></Slot>
            <TabTitle $w={353} $ls={-0.9}>반려견 동반 장소 찾기 - 비마이펫 플래닛</TabTitle>
            <Slot $w={50} $pad={15}><Cross /></Slot>
          </Tab>
          <Tab>
            <Slot $w={48}><Mdn /></Slot>
            <TabTitle $w={352} $ls={-0.75}>flex-wrap - CSS: Cascading Style Sheets</TabTitle>
            <Slot $w={50} $pad={15}><Cross /></Slot>
          </Tab>
          <TabSep />
          <Slot $w={40}>
            <svg width="26" height="68" viewBox="0 0 26 68" stroke="#9aa0a6" strokeWidth="3.600"><path d="M1 34h24M13 22v24" /></svg>
          </Slot>
        </TabStrip>

        <Toolbar>
          <Slot $w={64}><MdArrowBack size={34} /></Slot>
          <Slot $w={63}><MdArrowForward size={34} color="#6f7c8e" /></Slot>
          <Slot $w={63}><MdRefresh size={38} /></Slot>
          <Omnibox>
            <Slot $w={46}><MdLock size={25} color="#e8e8e8" /></Slot>
            <span>mypetlife.co.kr<em>/map/place-listings/#s=1</em></span>
            <Grow />
            <Slot $w={53}><MdStarBorder size={34} color="#c4c7ca" /></Slot>
          </Omnibox>
          <Slot $w={31} />
          <Slot $w={61}><GreySquare /></Slot>
          <Slot $w={64}><Notion light /></Slot>
          <Slot $w={66}><FaRecycle size={31} color="#2f5a62" /></Slot>
          <Slot $w={62}><Relative><Dropper /><DropperBadge>.</DropperBadge></Relative></Slot>
          <Slot $w={60}><FaReact size={31} /></Slot>
          <Slot $w={23}><svg width="2" height="32"><rect width="2" height="32" fill="#5b6778" /></svg></Slot>
          <Slot $w={82}><Avatar>W</Avatar></Slot>
          <svg width="8" height="28" viewBox="0 0 8 28" fill="#e8eaed"><circle cx="4" cy="4" r="3" /><circle cx="4" cy="14" r="3" /><circle cx="4" cy="24" r="3" /></svg>
        </Toolbar>

        <Bookmarks>
          <Bookmark $w={99} $gap={18}><AppsGrid />앱</Bookmark>
          {FOLDERS.map(([t, w]) => <Bookmark key={t} $w={w} $gap={15} $ls={-1.2}><Folder />{t}</Bookmark>)}
          <Bookmark $w={143} $gap={15} $ls={-1.2}><Notion />노순이</Bookmark>
          <Bookmark $w={175} $gap={15} $ls={-0.6}><FaGithub size={32} />one-iron</Bookmark>
          <Bookmark $w={257} $gap={21} $ls={-0.75}><Portrait />Home | One-Iron</Bookmark>
          <Bookmark $w={235} $gap={16} $ls={-0.9}><Trello />Boards | Trello</Bookmark>
          <Bookmark $w={307} $gap={19} $ls={-1}><FaPaw size={27} color="#4a4a4a" />반려견 동반 장소 찾기...</Bookmark>
          <Bookmark $w={307} $gap={16}><Sheets />7킨계 - Google 스프...</Bookmark>
          <Bookmark $w={210} $gap={16} $ls={-1.2}><Library />광진구립도서관</Bookmark>
        </Bookmarks>

        <PageHeader>
          <Brand><Logo /></Brand>
          <Grow />
          <Nav>
            <Slot $w={224}>동반 장소 보기</Slot>
            <Slot $w={39}><svg width="25" height="25" stroke="#fff" strokeWidth="3"><path d="M0 12.500h25M12.500 0v25" /></svg></Slot>
            <Slot $w={223}>동반 장소 추가</Slot>
            {NAV.map(([t, w]) => <Slot key={t} $w={w}>{t}</Slot>)}
          </Nav>
        </PageHeader>

        <CategoryBar>
          <svg width="30" height="26" viewBox="0 0 30 26" fill="#717a8f">
            <rect width="30" height="5.500" rx="2" /><rect y="10" width="30" height="5.500" rx="2" /><rect y="20" width="30" height="5.500" rx="2" />
          </svg>
          <CategoryText>동반 장소 종류별로 보기</CategoryText>
        </CategoryBar>

        <Body>
          <Panel>
            <Fields>
              <Field><FieldText>무엇이든 검색</FieldText></Field>
              <Field><FieldText>주소</FieldText><MdGpsFixed size={30} color={YELLOW} /></Field>
              <Field $h={88}>
                <FieldText>카테고리 선택...</FieldText>
                <svg width="27" height="16" viewBox="0 0 27 16" fill="none" stroke="#717a8f" strokeWidth="3.600"><path d="M1.500 1.500l12 12 12-12" /></svg>
              </Field>
            </Fields>
            <RadiusRow>
              <RadiusLabel>검색 반경: 51 km</RadiusLabel>
              <Track><Thumb $pos={49.7} /></Track>
            </RadiusRow>
            <FilterTitle>태그 필터:</FilterTitle>
            <Tags>
              {TAGS.map((t) => <Tag key={t}><Box />{t}</Tag>)}
            </Tags>
            <Submit>제출</Submit>
            <ResultRow>
              <ResultText>제안 검색 결과 (표시 중</ResultText>
              <Sort>거리</Sort>
            </ResultRow>
          </Panel>

          <MapPane>
            <MapArt />
            <Control $x={20} $y={20} $w={264}>
              <MapType $on>지도</MapType>
              <MapType>위성</MapType>
            </Control>
            <Control $x={1052} $y={20}>
              <svg width="36" height="36" fill="none" stroke="#666" strokeWidth="4"><path d="M2 12V2h10M24 2h10v10M34 24v10H24M12 34H2V24" /></svg>
            </Control>
            <Control $x={1052} $y={810}><Pegman /></Control>
            <ZoomControl $x={1052} $y={954} $h={162}>
              <svg width="60" height="160" viewBox="0 0 60 160">
                <path d="M12 39h36M30 21v36M12 121h36" stroke="#666" strokeWidth="8" />
                <path d="M0 80.500h60" stroke="#e6e6e6" strokeWidth="2" />
              </svg>
            </ZoomControl>
            <GoogleMark>Google</GoogleMark>
            <Credits>
              <Credit $ls={-0.15} $right={13}>지도 데이터 ©2020 Google, SK telecom</Credit>
              <Credit $ls={-0.6} $right={10}>이용약관</Credit>
            </Credits>
          </MapPane>
        </Body>
      </Window>

      <DockArea>
        <DockBar>
          <DockItem $run><Finder /></DockItem>
          <DockItem><Gear /></DockItem>
          <DockItem><Terminal /></DockItem>
          <DockItem><ITerm /></DockItem>
          <DockItem $run><VsCode /></DockItem>
          <DockItem><JsNote /></DockItem>
          <DockItem $run><Chrome /></DockItem>
          <DockItem $run><Slack /><DockBadge $x={56} $w={32}>•</DockBadge></DockItem>
          <DockItem $run><Kakao /><DockBadge $x={38} $w={50}>999+</DockBadge></DockItem>
          <DockItem $run><Typora /></DockItem>
          <DockSep />
          <DockItem><Preview /></DockItem>
          <DockSep />
          <DockItem><Target /></DockItem>
          <DockItem><Trash /></DockItem>
        </DockBar>
      </DockArea>
    </Desktop>
  );
}
